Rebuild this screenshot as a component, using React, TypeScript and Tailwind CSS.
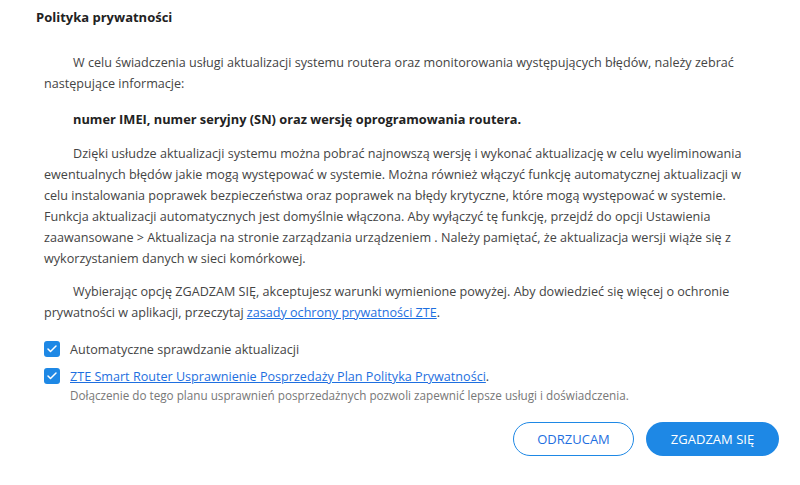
import { Check } from "lucide-react";

function CheckBox() {
  return (
    <span className="mt-[2px] flex h-4 w-4 shrink-0 items-center justify-center rounded-[3px] bg-[#1e88e5]">
      <Check className="h-3 w-3 text-white" strokeWidth={3} />
    </span>
  );
}

export default function App() {
  return (
    <div
      className="h-[485px] w-[800px] bg-white text-[12.6px] leading-[21px] text-[#444]"
      style={{ fontFamily: '"Segoe UI", "Open Sans", "Noto Sans", sans-serif' }}
    >
      <div className="pl-[36px] pr-[40px] pt-[7px]">
        <h1 className="text-[13px] font-bold text-[#222]">Polityka prywatności</h1>

        <div className="mt-[24px] pl-[8px]">
          <p className="indent-[29px]">
            W celu świadczenia usługi aktualizacji systemu routera oraz monitorowania występujących błędów, należy zebrać następujące informacje:
          </p>
          <p className="mt-[15px] indent-[29px] text-[12.8px] font-bold text-[#222]">
            numer IMEI, numer seryjny (SN) oraz wersję oprogramowania routera.
          </p>
          <p className="mt-[13px] indent-[29px]">
            Dzięki usłudze aktualizacji systemu można pobrać najnowszą wersję i wykonać aktualizację w celu wyeliminowania ewentualnych błędów jakie mogą występować w systemie. Można również włączyć funkcję automatycznej aktualizacji w celu instalowania poprawek bezpieczeństwa oraz poprawek na błędy krytyczne, które mogą występować w systemie. Funkcja aktualizacji automatycznych jest domyślnie włączona. Aby wyłączyć tę funkcję, przejdź do opcji Ustawienia zaawansowane &gt; Aktualizacja na stronie zarządzania urządzeniem . Należy pamiętać, że aktualizacja wersji wiąże się z wykorzystaniem danych w sieci komórkowej.
          </p>
          <p className="mt-[12px] indent-[29px]">
            Wybierając opcję ZGADZAM SIĘ, akceptujesz warunki wymienione powyżej. Aby dowiedzieć się więcej o ochronie prywatności w aplikacji, przeczytaj{" "}
            <a className="text-[#1e6fe0] underline">zasady ochrony prywatności ZTE</a>.
          </p>

          <div className="mt-[16px] flex items-start gap-[10px]">
            <CheckBox />
            <span>Automatyczne sprawdzanie aktualizacji</span>
          </div>
          <div className="mt-[6px] flex items-start gap-[10px]">
            <CheckBox />
            <div>
              <div>
                <a className="text-[#1e6fe0] underline">ZTE Smart Router Usprawnienie Posprzedaży Plan Polityka Prywatności</a>.
              </div>
              <div className="text-[11.7px] leading-[16px] text-[#777]">
                Dołączenie do tego planu usprawnień posprzedażnych pozwoli zapewnić lepsze usługi i doświadczenia.
              </div>
            </div>
          </div>
        </div>

        <div className="mt-[19px] flex justify-end gap-[12px]">
          <button className="h-[34px] w-[121px] rounded-full border border-[#1e88e5] text-[13px] text-[#1e6fe0]">
            ODRZUCAM
          </button>
          <button className="mr-[-19px] h-[34px] w-[133px] rounded-full bg-[#1e88e5] text-[13px] text-white">
            ZGADZAM SIĘ
          </button>
        </div>
      </div>
    </div>
  );
}
